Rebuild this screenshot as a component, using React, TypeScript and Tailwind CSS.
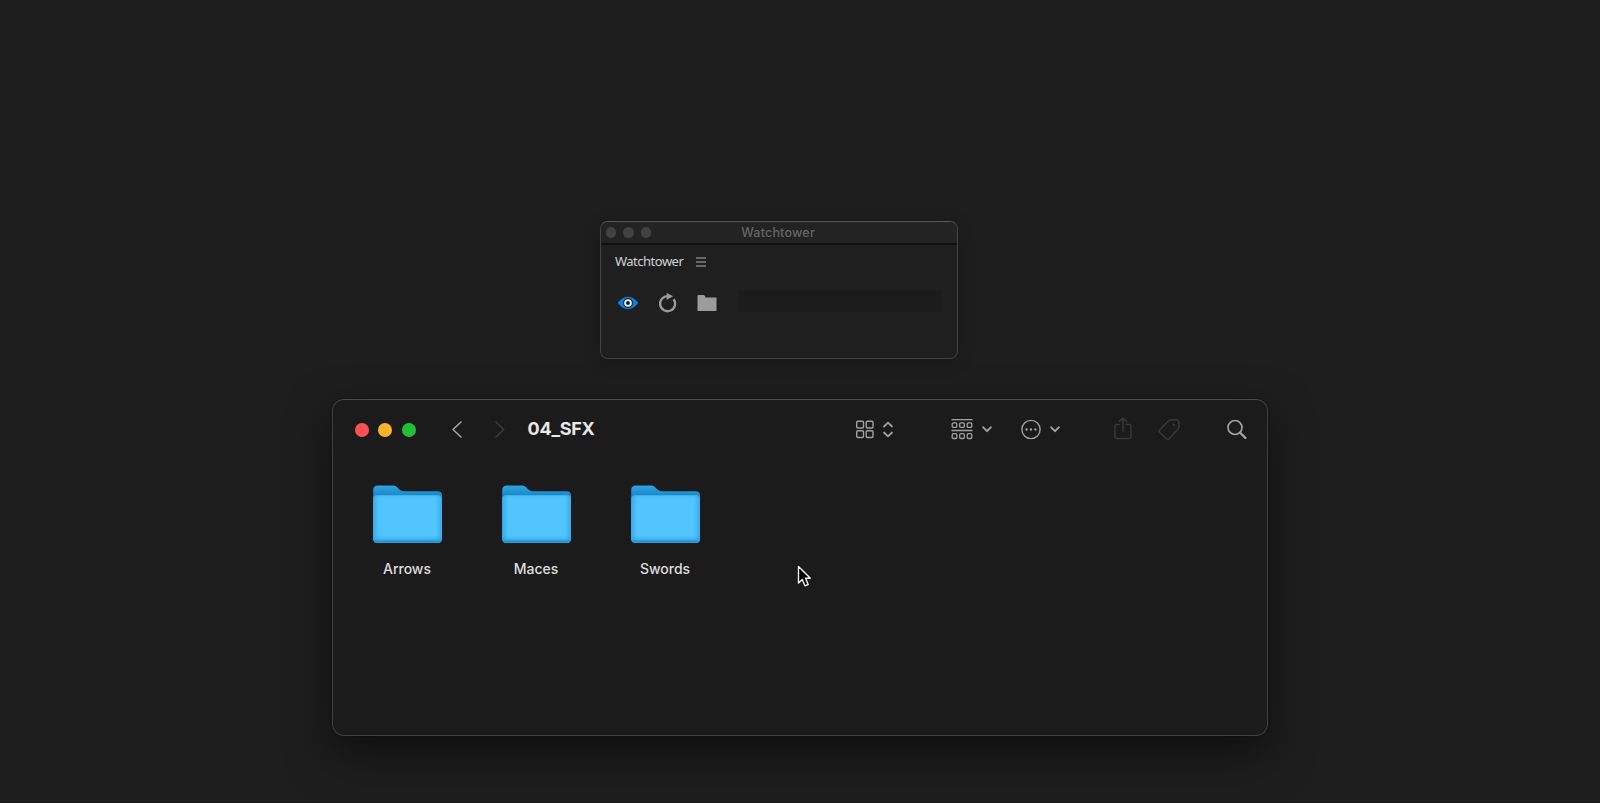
import type { ReactNode } from "react";

const folders = ["Arrows", "Maces", "Swords"];

function Icon({ w, h, className, children }: { w: number; h: number; className?: string; children: ReactNode }) {
  return (
    <svg width={w} height={h} viewBox={`0 0 ${w} ${h}`} fill="none" stroke="currentColor" strokeLinecap="round" strokeLinejoin="round" className={`shrink-0 ${className ?? ""}`}>
      {children}
    </svg>
  );
}

function WatchtowerPanel() {
  return (
    <section className="absolute left-[600px] top-[221px] flex h-[138px] w-[358px] flex-col overflow-hidden rounded-[8px] border border-[#434343] border-t-[#585858] bg-[#1f1f1f] shadow-[0_3px_16px_rgba(0,0,0,0.25)]">
      <header className="flex h-[23px] shrink-0 items-center border-b-2 border-[#111111] bg-[#232323] pl-[4.5px]">
        <div className="flex gap-[7px]">
          <span className="size-[10.6px] rounded-full bg-[#424242]" />
          <span className="size-[10.6px] rounded-full bg-[#424242]" />
          <span className="size-[10.6px] rounded-full bg-[#424242]" />
        </div>
        <h2 className="ml-[90px] pt-px font-['Inter',sans-serif] text-[12.5px] leading-none font-medium tracking-[0.2px] text-[#656565]">Watchtower</h2>
      </header>
      <div className="flex h-[32px] shrink-0 items-center pl-[14px]">
        <span className="w-[80.5px] font-['Noto_Sans',sans-serif] text-[13px] leading-none tracking-[-0.5px] text-[#d2d2d2]">Watchtower</span>
        <Icon w={10} h={10} className="translate-y-px text-[#b0b0b0]">
          <path d="M0 1H10M0 5H10M0 9H10" strokeWidth="1.2" strokeLinecap="butt" />
        </Icon>
      </div>
      <div className="flex items-center pt-[15px] pl-[16px]">
        <Icon w={22} h={22}>
          <path d="M.7 11C4 6.500 7.500 4.800 11 4.800S18 6.500 21.300 11C18 15.500 14.500 17.200 11 17.200S4 15.500 .7 11Z" fill="#0b80e0" stroke="none" />
          <circle cx="11" cy="11" r="4.900" fill="#141c28" stroke="none" />
          <circle cx="11" cy="11" r="2.900" stroke="#f2f2f2" strokeWidth="1.900" />
        </Icon>
        <Icon w={22} h={22} className="ml-[17px] text-[#9b9b9b]">
          <path d="M17.600 7.200A7.500 7.500 0 1 1 12 4.200" strokeWidth="2.300" strokeLinecap="butt" />
          <path d="M10.700 1L17.200 4.300L10.700 7.800Z" fill="currentColor" stroke="none" />
        </Icon>
        <Icon w={20} h={18} className="ml-[18.500px] text-[#9c9c9c]">
          <path d="M.5 2Q.5 1 1.500 1H6.500Q7.300 1 7.700 1.800L8.600 3.500H19.500V17H.5Z" fill="currentColor" stroke="none" />
        </Icon>
        <div className="ml-[22px] h-[20px] w-[202px] -translate-y-[1.5px] bg-[#1b1b1b]" />
      </div>
    </section>
  );
}

function Chevron({ className }: { className?: string }) {
  return (
    <Icon w={10} h={7} className={className}>
      <path d="M1.200 1.300L5 5.200L8.800 1.300" strokeWidth="1.900" />
    </Icon>
  );
}

function FolderArt() {
  return (
    <svg width="70" height="60" viewBox="0 0 70 60" className="block">
      <defs>
        <linearGradient id="back" x1="0" y1="0" x2="0" y2="1">
          <stop offset="0" stopColor="#2ba5e2" />
          <stop offset="0.18" stopColor="#1b86c4" />
          <stop offset="1" stopColor="#269bda" />
        </linearGradient>
        <linearGradient id="front" x1="0" y1="0" x2="0" y2="1">
          <stop offset="0" stopColor="#49bdf7" />
          <stop offset="0.08" stopColor="#52c5ff" />
          <stop offset="0.84" stopColor="#52c5ff" />
          <stop offset="0.93" stopColor="#40b3ee" />
          <stop offset="0.95" stopColor="#2599d7" />
          <stop offset="1" stopColor="#2599d7" />
        </linearGradient>
        <linearGradient id="sides">
          <stop offset="0" stopColor="#249add" />
          <stop offset="0.09" stopColor="#249add" stopOpacity="0" />
          <stop offset="0.91" stopColor="#249add" stopOpacity="0" />
          <stop offset="1" stopColor="#249add" />
        </linearGradient>
      </defs>
      <path d="M.2 5Q.2.500 5 .5H20.500C24.500.500 26 6.300 31 6.300H64.500Q69 6.300 69 10.500V53.500Q69 58 64.500 58H4.700Q.2 58 .2 53.500Z" fill="url(#back)" />
      <path d="M.2 14Q.2 10.300 4 10.300H65.200Q69 10.300 69 14V53.500Q69 58 64.500 58H4.700Q.2 58 .2 53.500Z" fill="url(#front)" />
      <path d="M.2 14Q.2 10.300 4 10.300H65.200Q69 10.300 69 14V53.500Q69 58 64.500 58H4.700Q.2 58 .2 53.500Z" fill="url(#sides)" opacity="0.600" />
    </svg>
  );
}

function FinderWindow() {
  return (
    <section className="absolute left-[332px] top-[399px] h-[337px] w-[936px] rounded-[12px] border border-[#404041] border-t-[#4b4b4b] bg-[#1b1b1c] font-['Inter',sans-serif] shadow-[0_18px_46px_rgba(0,0,0,0.5),0_0_2px_#111]">
      <header className="flex h-[59px] items-center pl-[22px] text-[#a2a2a2]">
        <div className="flex gap-[9.300px]">
          <span className="size-[14px] rounded-full bg-[#fc5054]" />
          <span className="size-[14px] rounded-full bg-[#fdb228]" />
          <span className="size-[14px] rounded-full bg-[#24bf38]" />
        </div>
        <Icon w={12} h={18} className="ml-[35px] -translate-y-[0.5px]">
          <path d="M10 1.500L2 9L10 16.500" strokeWidth="1.600" />
        </Icon>
        <Icon w={12} h={18} className="ml-[31px] -translate-y-[0.5px] text-[#3c3c3c]">
          <path d="M2 1.500L9.700 9L2 16.500" strokeWidth="1.600" />
        </Icon>
        <h1 className="ml-[22px] w-[327.500px] -translate-y-px text-[18px] leading-none font-bold tracking-[-0.250px] text-[#e8e8e8]">04_SFX</h1>
        <div className="flex -translate-y-[0.5px] items-center">
          <Icon w={20} h={20}>
            <rect x="1.700" y="1.700" width="6.800" height="6.800" rx="1.200" strokeWidth="1.400" />
            <rect x="11.200" y="1.700" width="6.800" height="6.800" rx="1.200" strokeWidth="1.400" />
            <rect x="1.700" y="11.200" width="6.800" height="6.800" rx="1.200" strokeWidth="1.400" />
            <rect x="11.200" y="11.200" width="6.800" height="6.800" rx="1.200" strokeWidth="1.400" />
          </Icon>
          <Icon w={10} h={18} className="ml-[8px]">
            <path d="M1 6L5 2.200L9 6M1 12L5 15.800L9 12" strokeWidth="1.800" />
          </Icon>
          <Icon w={22} h={22} className="ml-[58px]">
            <path d="M.5 1.200H21.500M.5 12H21.500" strokeWidth="1.300" strokeLinecap="butt" />
            {[1.2, 8.7, 16.2].map((x) => (
              <g key={x} strokeWidth="1.300">
                <rect x={x} y="4.300" width="4.600" height="4.600" rx="1.200" />
                <rect x={x} y="15.200" width="4.600" height="4.800" rx="1.200" />
              </g>
            ))}
          </Icon>
          <Chevron className="ml-[9px] translate-y-[0.5px]" />
          <Icon w={20} h={20} className="ml-[29px]">
            <circle cx="10" cy="10" r="9.100" strokeWidth="1.400" />
            <path d="M5.600 10h.01M10 10h.01M14.400 10h.01" strokeWidth="2.400" />
          </Icon>
          <Chevron className="ml-[9px] translate-y-[0.5px]" />
          <Icon w={18} h={24} className="ml-[54px] -translate-y-px text-[#393939]">
            <path d="M5.500 8H2.700Q1 8 1 9.700V20.300Q1 22 2.700 22H15.300Q17 22 17 20.300V9.700Q17 8 15.300 8H12.500M9 15V1.700M5.500 4.900L9 1.500L12.500 4.900" strokeWidth="1.500" />
          </Icon>
          <Icon w={22} h={22} className="ml-[26px] text-[#393939]">
            <path d="M1.600 11.400L10.400 2.500Q11.700 1.200 13.500 1.200H17.300Q21 1.200 21 4.800V7.800Q21 9.500 19.800 10.800L11.200 20.200Q9.900 21.600 8.500 20.200L1.700 13.800Q.500 12.600 1.600 11.400Z" strokeWidth="1.500" />
            <circle cx="15.800" cy="6.200" r=".6" strokeWidth="1.200" />
          </Icon>
          <Icon w={20} h={20} className="ml-[47px]">
            <circle cx="8" cy="8" r="7" strokeWidth="1.700" />
            <path d="M13.200 13.200L18.400 18.400" strokeWidth="2.300" />
          </Icon>
        </div>
      </header>
      <div className="flex pt-[26px] pl-[10px]">
        {folders.map((name) => (
          <div key={name} className="flex w-[129px] flex-col items-center">
            <FolderArt />
            <span className="mt-[15px] mr-[1px] text-[14px] leading-[17px] font-medium text-[#dedede]">{name}</span>
          </div>
        ))}
      </div>
    </section>
  );
}

export default function App() {
  return (
    <main className="relative h-[803px] w-full overflow-hidden border-b border-[#191919] bg-[#1e1e1e]">
      <WatchtowerPanel />
      <FinderWindow />
      <svg width="18" height="24" viewBox="0 0 18 24" className="absolute left-[797px] top-[564px]">
        <path d="M1.500 2.500V19L5.200 15.500L8 21.800L11.200 20.500L8.500 14.200H13.300Z" fill="#000" stroke="#f4f4f4" strokeWidth="1.400" strokeLinejoin="round" />
      </svg>
    </main>
  );
}
